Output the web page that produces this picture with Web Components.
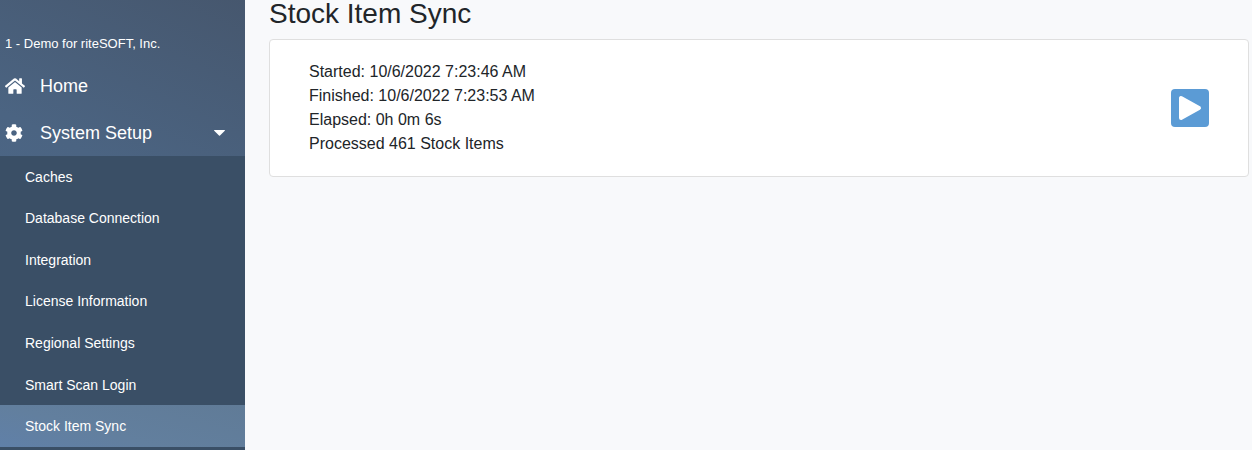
<!DOCTYPE html>
<html lang="en">
<head>
  <meta charset="utf-8">
  <meta name="viewport" content="width=device-width, initial-scale=1">
  <title>Stock Item Sync</title>
  <style>
    body {
      margin: 0;
      font-family: "Liberation Sans", Arial, sans-serif;
      font-size: 16px;
      line-height: 24px;
      color: #212529;
      background-color: #f8f9fb;
    }
  </style>
</head>
<body>
  <app-shell>
    <side-nav slot="nav" company="1 - Demo for riteSOFT, Inc.">
      <nav-item icon="home">Home</nav-item>
      <nav-group icon="cog" label="System Setup">
        <nav-sub-item>Caches</nav-sub-item>
        <nav-sub-item>Database Connection</nav-sub-item>
        <nav-sub-item>Integration</nav-sub-item>
        <nav-sub-item>License Information</nav-sub-item>
        <nav-sub-item>Regional Settings</nav-sub-item>
        <nav-sub-item>Smart Scan Login</nav-sub-item>
        <nav-sub-item active>Stock Item Sync</nav-sub-item>
      </nav-group>
    </side-nav>
    <page-title>Stock Item Sync</page-title>
    <sync-card>
      <div>Started: 10/6/2022 7:23:46 AM</div>
      <div>Finished: 10/6/2022 7:23:53 AM</div>
      <div>Elapsed: 0h 0m 6s</div>
      <div>Processed 461 Stock Items</div>
    </sync-card>
  </app-shell>

  <script>
    const icons = {
      home: {
        box: '0 0 576 512',
        width: 20,
        path: 'M280.37 148.26L96 300.11V464a16 16 0 0 0 16 16l112.06-.29a16 16 0 0 0 15.92-16V368a16 16 0 0 1 16-16h64a16 16 0 0 1 16 16v95.64a16 16 0 0 0 16 16.05L464 480a16 16 0 0 0 16-16V300L295.67 148.26a12.19 12.19 0 0 0-15.3 0zM571.6 251.47L488 182.56V44.05a12 12 0 0 0-12-12h-56a12 12 0 0 0-12 12v72.61L318.47 43a48 48 0 0 0-61 0L4.34 251.47a12 12 0 0 0-1.6 16.9l25.5 31A12 12 0 0 0 45.15 301l235.22-193.74a12.19 12.19 0 0 1 15.3 0L530.9 301a12 12 0 0 0 16.9-1.6l25.5-31a12 12 0 0 0-1.7-16.93z'
      },
      cog: {
        box: '0 0 512 512',
        width: 18,
        path: 'M487.4 315.7l-42.6-24.6c4.3-23.2 4.3-47 0-70.2l42.6-24.6c4.9-2.8 7.1-8.6 5.5-14-11.1-35.6-30-67.8-54.7-94.6-3.8-4.1-10-5.1-14.8-2.3L380.8 110c-17.9-15.4-38.5-27.3-60.8-35.1V25.8c0-5.6-3.9-10.5-9.4-11.7-36.7-8.2-74.3-7.8-109.2 0-5.5 1.2-9.4 6.1-9.4 11.7V75c-22.2 7.9-42.8 19.8-60.8 35.1L88.7 85.5c-4.9-2.8-11-1.9-14.8 2.3-24.7 26.7-43.6 58.9-54.7 94.6-1.7 5.4.6 11.2 5.5 14L67.3 221c-4.3 23.2-4.3 47 0 70.2l-42.6 24.6c-4.9 2.8-7.1 8.6-5.5 14 11.1 35.6 30 67.8 54.7 94.6 3.8 4.1 10 5.1 14.8 2.3l42.6-24.6c17.9 15.4 38.5 27.3 60.8 35.1v49.2c0 5.6 3.9 10.5 9.4 11.7 36.7 8.2 74.3 7.8 109.2 0 5.5-1.2 9.4-6.1 9.4-11.7v-49.2c22.2-7.9 42.8-19.8 60.8-35.1l42.6 24.6c4.9 2.8 11 1.9 14.8-2.3 24.7-26.7 43.6-58.9 54.7-94.6 1.5-5.5-.7-11.3-5.6-14.1zM256 336c-44.1 0-80-35.9-80-80s35.9-80 80-80 80 35.9 80 80-35.9 80-80 80z'
      }
    };

    function iconSvg(name) {
      const icon = icons[name];
      return `<svg viewBox="${icon.box}" width="${icon.width}" height="18" fill="currentColor" aria-hidden="true"><path d="${icon.path}"/></svg>`;
    }

    // Shared by the top level entries
    const rowStyles = `
      :host {
        display: block;
      }

      .row {
        display: flex;
        align-items: center;
        box-sizing: border-box;
        width: 100%;
        padding: 12px 20px 11px 5px;
        border: none;
        background: none;
        color: white;
        font: inherit;
        font-size: 18px;
        line-height: 24px;
        text-align: left;
        text-decoration: none;
        cursor: pointer;
      }

      .icon {
        display: flex;
        width: 35px;
      }
    `;

    class AppShell extends HTMLElement {
      constructor() {
        super();
        this.attachShadow({ mode: 'open' });
        this.shadowRoot.innerHTML = `
          <style>
            :host {
              display: flex;
              min-height: 100vh;
            }

            aside {
              display: flex;
              flex: 0 0 245px;
            }

            main {
              flex: 1;
              min-width: 0;
              padding: 0 3px 0 24px;
            }
          </style>

          <aside><slot name="nav"></slot></aside>
          <main><slot></slot></main>
        `;
      }
    }

    class SideNav extends HTMLElement {
      constructor() {
        super();
        this.attachShadow({ mode: 'open' });
        this.shadowRoot.innerHTML = `
          <style>
            :host {
              display: block;
              flex: 1;
              color: white;
              background: linear-gradient(205deg, #46576e 0%, #4b6482 40%, #4d6b90 100%);
            }

            .company {
              padding: 32px 5px 6px;
              font-size: 13px;
            }
          </style>

          <div class="company"></div>
          <nav><slot></slot></nav>
        `;
      }

      connectedCallback() {
        this.shadowRoot.querySelector('.company').textContent = this.getAttribute('company');
      }
    }

    class NavItem extends HTMLElement {
      constructor() {
        super();
        this.attachShadow({ mode: 'open' });
      }

      connectedCallback() {
        this.shadowRoot.innerHTML = `
          <style>${rowStyles}</style>
          <a class="row" href="#">
            <span class="icon">${iconSvg(this.getAttribute('icon'))}</span>
            <slot></slot>
          </a>
        `;
      }
    }

    class NavGroup extends HTMLElement {
      constructor() {
        super();
        this.attachShadow({ mode: 'open' });
      }

      connectedCallback() {
        this.shadowRoot.innerHTML = `
          <style>
            ${rowStyles}

            .label {
              flex: 1;
            }

            .items {
              display: grid;
              grid-auto-rows: 1fr;
              min-height: 291px;
              padding-bottom: 3px;
              background-color: #3a4f66;
            }

            .items[hidden] {
              display: none;
            }
          </style>

          <button class="row" type="button" aria-expanded="true">
            <span class="icon">${iconSvg(this.getAttribute('icon'))}</span>
            <span class="label">${this.getAttribute('label')}</span>
            <svg viewBox="0 0 11 6" width="11" height="6" fill="currentColor" aria-hidden="true"><path d="M.5 0h10a.4.4 0 0 1 .3.7L6 5.6a.7.7 0 0 1-1 0L.2.7A.4.4 0 0 1 .5 0z"/></svg>
          </button>
          <div class="items"><slot></slot></div>
        `;

        const button = this.shadowRoot.querySelector('button');
        const items = this.shadowRoot.querySelector('.items');
        button.addEventListener('click', () => {
          items.hidden = !items.hidden;
          button.setAttribute('aria-expanded', String(!items.hidden));
        });
      }
    }

    class NavSubItem extends HTMLElement {
      constructor() {
        super();
        this.attachShadow({ mode: 'open' });
        this.shadowRoot.innerHTML = `
          <style>
            :host {
              display: flex;
            }

            a {
              display: flex;
              flex: 1;
              align-items: center;
              padding: 0 25px;
              color: white;
              font-size: 14px;
              line-height: 22px;
              text-decoration: none;
            }

            :host([active]) a {
              background: linear-gradient(15deg, #6080a8, #627f9e 40%, #607b97);
            }
          </style>

          <a href="#"><slot></slot></a>
        `;
      }
    }

    class PageTitle extends HTMLElement {
      constructor() {
        super();
        this.attachShadow({ mode: 'open' });
        this.shadowRoot.innerHTML = `
          <style>
            :host {
              display: block;
            }

            h1 {
              margin: 0 0 11px;
              font-size: 28px;
              font-weight: 400;
              line-height: 28px;
            }
          </style>

          <h1><slot></slot></h1>
        `;
      }
    }

    class SyncCard extends HTMLElement {
      constructor() {
        super();
        this.attachShadow({ mode: 'open' });
        this.shadowRoot.innerHTML = `
          <style>
            :host {
              display: flex;
              align-items: center;
              justify-content: space-between;
              padding: 20px 39px;
              border: 1px solid #dfdfdf;
              border-radius: 4px;
              background-color: white;
            }

            button {
              display: flex;
              padding: 0;
              border: none;
              background: none;
              color: #5b9bd5;
              cursor: pointer;
            }
          </style>

          <div><slot></slot></div>
          <button type="button" aria-label="Start sync">
            <svg viewBox="0 0 38 38" width="38" height="38" aria-hidden="true">
              <rect width="38" height="38" rx="4" fill="currentColor"/>
              <path d="M10 9v20L28 19z" fill="white" stroke="white" stroke-width="4" stroke-linejoin="round"/>
            </svg>
          </button>
        `;
      }
    }

    customElements.define('app-shell', AppShell);
    customElements.define('side-nav', SideNav);
    customElements.define('nav-item', NavItem);
    customElements.define('nav-group', NavGroup);
    customElements.define('nav-sub-item', NavSubItem);
    customElements.define('page-title', PageTitle);
    customElements.define('sync-card', SyncCard);
  </script>
</body>
</html>
